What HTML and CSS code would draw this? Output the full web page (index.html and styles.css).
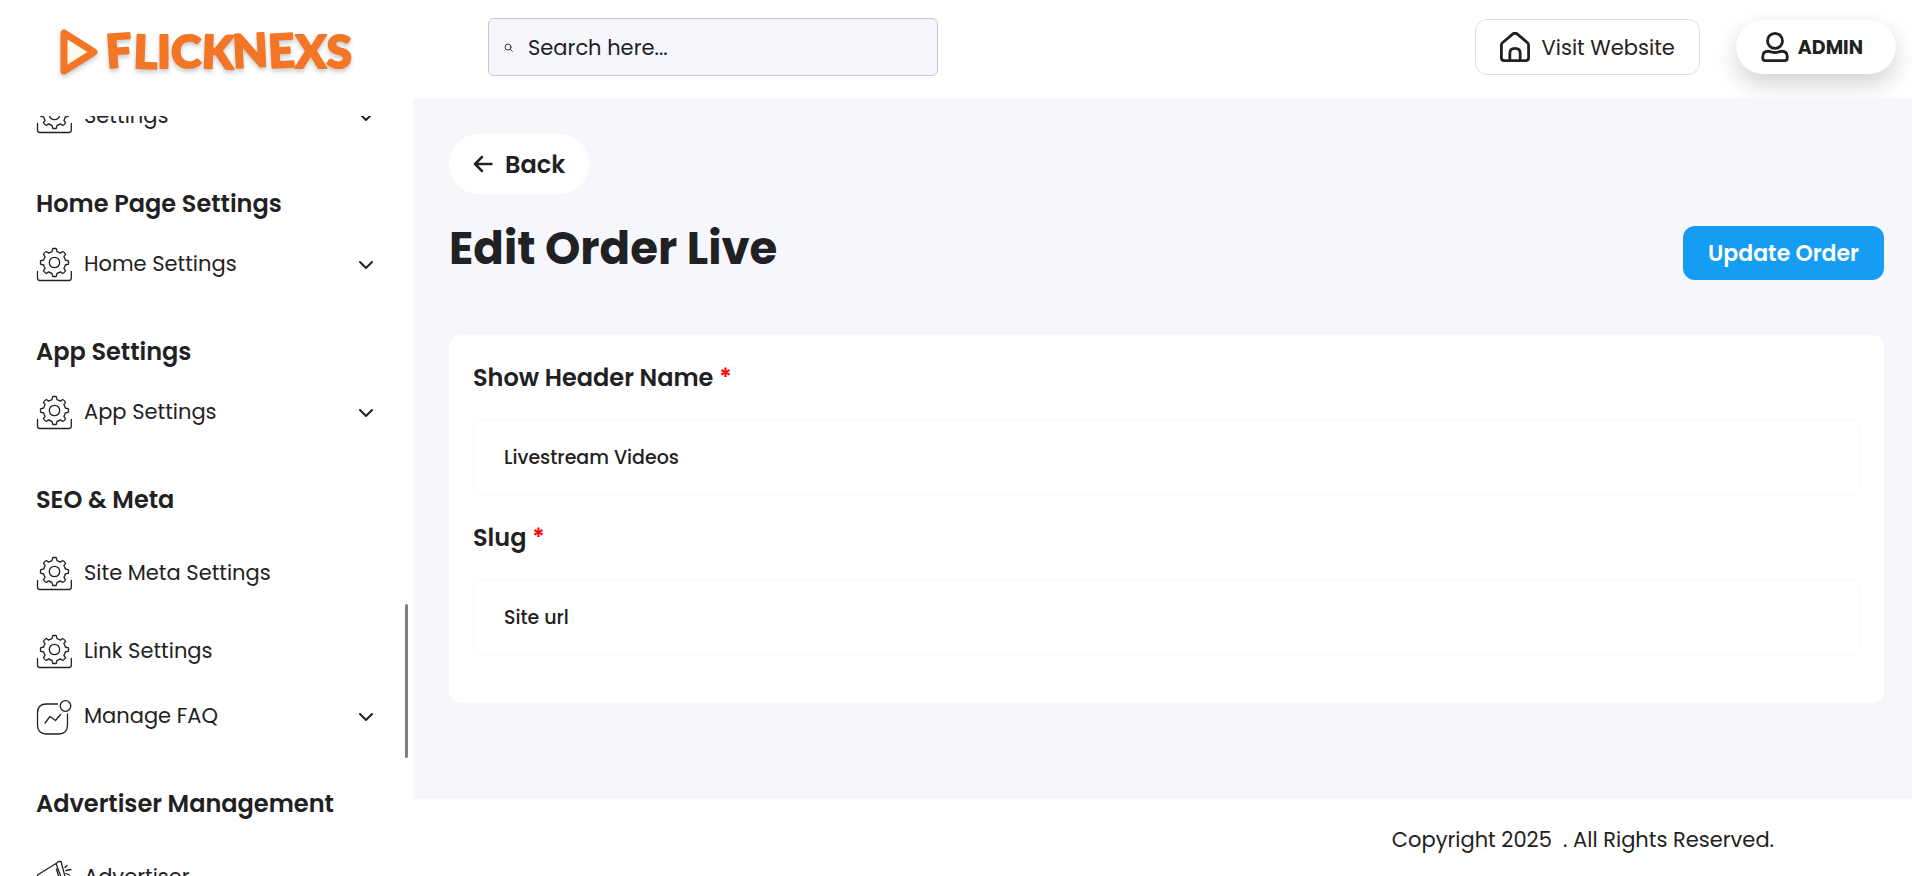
FILE: index.html
```html
<!DOCTYPE html>
<html lang="en">
<head>
<meta charset="utf-8">
<title>Edit Order Live</title>
<link rel="stylesheet" href="styles.css">
</head>
<body>
<svg class="sprite" aria-hidden="true">
  <symbol id="i-gear" viewBox="0 0 36 36">
    <path d="M1.500 24.500V31Q1.500 33.500 4 33.500H33Q35.300 33.500 35.300 31V24.500"/>
    <circle cx="18.500" cy="15.500" r="5.200"/>
    <path transform="translate(.5 0)" d="M15.500 4.600L16.300 1.500H19.700L20.500 4.600Q22.300 5.200 23.900 6.100L26.200 4.500Q28 5.400 29 7.300L27.400 9.600Q28.400 11.200 28.800 13L32 13.800V17.200L28.800 18Q28.400 19.800 27.400 21.400L29 23.700Q28 25.600 26.200 26.500L23.900 24.900Q22.300 25.900 20.500 26.400L19.700 29.500H16.300L15.500 26.400Q13.700 25.900 12.100 24.900L9.800 26.500Q8 25.600 7 23.700L8.600 21.400Q7.600 19.800 7.200 18L4 17.200V13.800L7.200 13Q7.600 11.200 8.600 9.600L7 7.300Q8 5.400 9.800 4.500L12.100 6.100Q13.700 5.200 15.500 4.600Z"/>
  </symbol>
  <symbol id="i-chart" viewBox="0 0 36 36">
    <path d="M21.500 5H10.500Q1.500 5 1.500 14V26Q1.500 35 10.500 35H22.500Q31.500 35 31.500 26V15M9 24L14 17.500L19.500 21.500L24.500 15.500"/>
    <circle cx="29.500" cy="7" r="5.300"/>
  </symbol>
  <symbol id="i-horn" viewBox="0 0 36 36">
    <path d="M1.500 15L20 3.500M20 3.500L22.500 1.500H25L31 24L28 25L20 3.500M3 24L28 25M1.500 15L3 24M20.500 9L22.500 16M29 7.500L31 5.500M30 10.500L35 9.500M30 13.500L33.500 15"/>
  </symbol>
  <symbol id="i-chevron" viewBox="0 0 16 16"><path d="M2 5L8 11L14 5"/></symbol>
</svg>

<header class="topbar">
  <a class="logo" href="#" aria-label="Flicknexs">
    <svg class="logo-art" viewBox="0 0 310 60">
      <path class="logo-play" d="M8 9V47L38 28Z"/>
      <text class="logo-text" x="51" y="44" rotate="-4 2 0 0 2 -3 -3 0 0">FLICKNEXS</text>
    </svg>
  </a>
  <form class="search">
    <svg class="search-icon" viewBox="0 0 10 10"><circle cx="4.500" cy="4.500" r="3.300"/><path d="M7 7L9.300 9.300"/></svg>
    <input class="search-input" type="text" placeholder="Search here..." aria-label="Search">
  </form>
  <div class="actions">
    <a class="visit" href="#">
      <svg class="action-icon" viewBox="0 0 32 32"><path d="M1.500 14Q1.500 12.500 2.600 11.500L13.500 2.200Q16 .400 18.500 2.200L29.400 11.500Q30.500 12.500 30.500 14V27.500Q30.500 30.500 27.500 30.500H4.500Q1.500 30.500 1.500 27.500ZM10.500 30V22.500Q10.500 17.500 16 17.500T21.500 22.500V30"/></svg>
      Visit Website
    </a>
    <button class="admin" type="button">
      <svg class="action-icon" viewBox="0 0 32 32"><circle cx="16" cy="9.500" r="8"/><path d="M3 26Q3 20.500 8.500 20.500Q10 20.500 12 21.200Q16 22.500 20 21.200Q22 20.500 23.500 20.500Q29 20.500 29 26V28Q29 30.500 26.500 30.500H5.500Q3 30.500 3 28Z"/></svg>
      ADMIN
    </button>
  </div>
</header>

<div class="layout">
  <aside class="sidebar">
    <nav class="menu" aria-label="Main">
      <button class="item" type="button"><svg class="icon"><use href="#i-gear"/></svg>Settings<svg class="chevron"><use href="#i-chevron"/></svg></button>
      <h2 class="group">Home Page Settings</h2>
      <button class="item" type="button"><svg class="icon"><use href="#i-gear"/></svg>Home Settings<svg class="chevron"><use href="#i-chevron"/></svg></button>
      <h2 class="group">App Settings</h2>
      <button class="item" type="button"><svg class="icon"><use href="#i-gear"/></svg>App Settings<svg class="chevron"><use href="#i-chevron"/></svg></button>
      <h2 class="group">SEO &amp; Meta</h2>
      <a class="item item-link" href="#"><svg class="icon"><use href="#i-gear"/></svg>Site Meta Settings</a>
      <a class="item item-link" href="#"><svg class="icon"><use href="#i-gear"/></svg>Link Settings</a>
      <button class="item" type="button"><svg class="icon"><use href="#i-chart"/></svg>Manage FAQ<svg class="chevron"><use href="#i-chevron"/></svg></button>
      <h2 class="group">Advertiser Management</h2>
      <a class="item item-link" href="#"><svg class="icon"><use href="#i-horn"/></svg>Advertiser</a>
    </nav>
    <div class="scroll-thumb"></div>
  </aside>

  <div class="content">
    <main class="page">
      <a class="back" href="#"><svg class="back-icon" viewBox="0 0 20 20"><path d="M18.500 10H2M9 3L2 10L9 17"/></svg>Back</a>
      <div class="title-row">
        <h1 class="title">Edit Order Live</h1>
        <button class="update" type="submit" form="order-form">Update Order</button>
      </div>
      <form class="card" id="order-form">
        <label class="label" for="header-name">Show Header Name <span class="required">*</span></label>
        <input class="field" id="header-name" type="text" value="Livestream Videos">
        <label class="label" for="slug">Slug <span class="required">*</span></label>
        <input class="field" id="slug" type="text" value="Site url">
      </form>
    </main>
    <footer class="footer">Copyright 2025 &nbsp;. All Rights Reserved.</footer>
  </div>
</div>
</body>
</html>
```

FILE: styles.css
```css
* { box-sizing: border-box; }

body {
  margin: 0;
  height: 100vh;
  display: flex;
  flex-direction: column;
  overflow: hidden;
  background: #fff;
  color: #1f2122;
  font-family: Poppins, Inter, "Noto Sans", sans-serif;
  font-size: 21px;
}

a { color: inherit; text-decoration: none; }
button, input { font: inherit; color: inherit; }
button { cursor: pointer; }
svg { flex: none; fill: none; stroke: currentColor; stroke-linecap: round; stroke-linejoin: round; }
.sprite { position: absolute; width: 0; height: 0; }

/* Top bar */
.topbar {
  flex: none;
  display: flex;
  align-items: center;
  height: 98px;
  padding: 0 16px 4px 56px;
}
.logo { width: 432px; height: 60px; margin-top: 14px; }
.logo-art { width: 310px; height: 60px; overflow: visible; filter: drop-shadow(0 3px 2px rgba(0, 0, 0, .2)); }
.logo-play { stroke: #f37626; stroke-width: 7px; fill: #fffbea; }
.logo-text {
  font-family: Lato, sans-serif;
  font-size: 46px;
  font-weight: 900;
  fill: #f37626;
  stroke: #f37626;
  stroke-width: 2px;
}
.search {
  display: flex;
  align-items: center;
  gap: 15px;
  width: 450px;
  height: 58px;
  padding: 0 15px;
  border: 1px solid #c9c9cb;
  border-radius: 6px;
  background: #f5f7fc;
}
.search-icon { width: 9px; height: 9px; }
.search-input { flex: 1; min-width: 0; padding: 0; border: 0; outline: 0; background: none; }
.search-input::placeholder { color: #1f2122; opacity: 1; }
.actions { display: flex; align-items: center; gap: 36px; margin-left: auto; }
.visit, .admin { display: flex; align-items: center; background: #fff; white-space: nowrap; }
.visit { gap: 12px; height: 56px; padding: 0 24px; border: 1px solid #dedee0; border-radius: 12px; }
.admin {
  gap: 8px;
  height: 54px;
  padding: 0 33px 0 24px;
  border: 0;
  border-radius: 27px;
  box-shadow: 0 10px 24px rgba(0, 0, 0, .18);
  font-size: 19px;
  font-weight: 700;
}
.action-icon { width: 30px; height: 30px; stroke-width: 3px; }

/* Sidebar */
.layout { flex: 1; min-height: 0; display: flex; }
.sidebar { position: relative; flex: none; width: 413px; padding-top: 18px; }
.menu { height: 100%; overflow: hidden; padding: 0 36px; }
.item {
  display: flex;
  align-items: center;
  gap: 12px;
  width: 100%;
  height: 52px;
  padding: 0;
  border: 0;
  background: none;
  text-align: left;
}
.item:first-child { margin-top: -27px; }
.item-link { height: 78px; }
.icon { width: 36px; height: 36px; margin-top: 3px; stroke-width: 1.300px; }
.chevron { width: 16px; height: 16px; margin: 3px 3px 0 auto; stroke-width: 2px; }
.group { margin: 0; padding: 48px 0 18px; font-size: 24px; line-height: 30px; font-weight: 600; }
.scroll-thumb {
  position: absolute;
  top: 506px;
  right: 5px;
  width: 3px;
  height: 154px;
  border-radius: 2px;
  background: #808080;
}

/* Content */
.content { flex: 1; min-width: 0; display: flex; flex-direction: column; }
.page { flex: 1; padding: 36px 28px 0 36px; background: #f5f7fc; }
.back {
  display: inline-flex;
  align-items: center;
  gap: 12px;
  height: 60px;
  padding: 0 24px;
  border-radius: 30px;
  background: #fff;
  font-size: 24px;
  font-weight: 600;
}
.back-icon { width: 20px; height: 20px; stroke-width: 2.500px; }
.title-row { display: flex; align-items: flex-end; justify-content: space-between; margin-top: 28px; }
.title { margin: 0; padding-bottom: 4px; font-size: 45px; line-height: 54px; font-weight: 700; }
.update {
  height: 54px;
  padding: 0 25px;
  border: 0;
  border-radius: 12px;
  background: #149df2;
  color: #fff;
  font-size: 22px;
  font-weight: 600;
}
.card { margin-top: 55px; padding: 25px 24px 48px; border-radius: 12px; background: #fff; }
.label { display: block; margin-bottom: 23px; font-size: 24px; line-height: 36px; font-weight: 600; }
.required { color: #f00; }
.field {
  display: block;
  width: 100%;
  height: 76px;
  padding: 0 30px;
  border: 1px solid #f5f7fc;
  border-radius: 12px;
  background: #fff;
  font-size: 19px;
  font-weight: 500;
}
.field + .label { margin-top: 25px; }
.footer { flex: none; padding: 24px 138px 20px; line-height: 33px; text-align: right; }
```
